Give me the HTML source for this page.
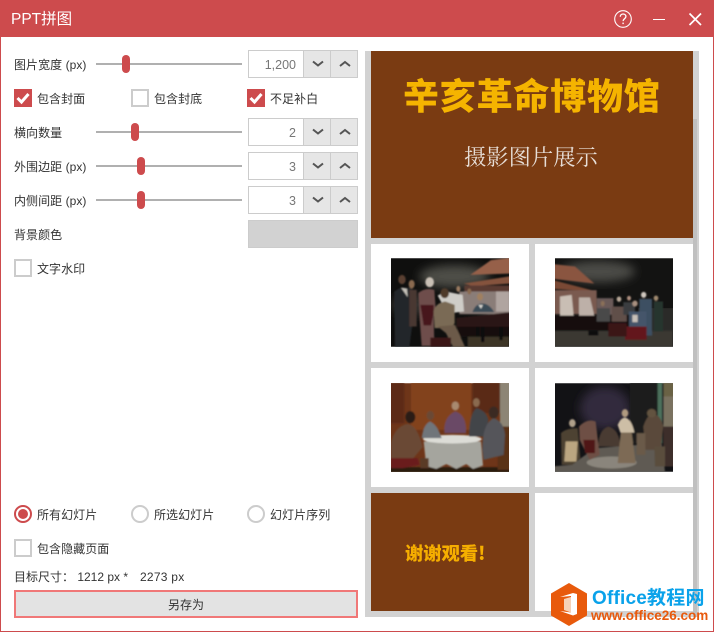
<!DOCTYPE html>
<html lang="zh"><head><meta charset="utf-8"><title>PPT拼图</title>
<style>
html,body{margin:0;padding:0;background:#fff}
#w{position:relative;width:714px;height:632px;overflow:hidden;background:#fff;font-family:"Liberation Sans","Noto Sans CJK SC",sans-serif;font-size:12px;color:#333}
#w div,#w span,#w svg{position:absolute;display:block;box-sizing:border-box}
.t{white-space:nowrap;height:18px;line-height:18px}
.l{margin-top:1px;letter-spacing:.05px}
.track{left:96px;width:146px;height:2px;background:#b0b0b0}
.thumb{width:8px;height:18px;border-radius:4px;background:#cd4b4d}
.spin{left:248px;width:110px;height:28px;border:1px solid #ccc;background:#fff}
.num{right:61px;top:5px;height:18px;line-height:18px;color:#777;font-size:12.5px}
.b1,.b2{top:0;width:27px;height:26px;background:#e6e6e6;border-left:1px solid #ccc}
.b1{left:54px}.b2{left:81px;width:27px}
.cb{width:18px;height:18px;border:2px solid #ccc;background:#fff}
.cb.on{background:#cd4b4d;border:0}
.rd{width:18px;height:18px;border-radius:50%;border:2px solid #ccc;background:#fff}
</style></head><body>
<div id="w">
<div style="left:0;top:0;width:714px;height:37px;background:#cd4b4d"></div>
<div style="left:0;top:37px;width:1px;height:595px;background:#cd4b4d"></div>
<div style="left:713px;top:37px;width:1px;height:595px;background:#cd4b4d"></div>
<div style="left:0;top:631px;width:714px;height:1px;background:#cd4b4d"></div>
<div class="t" style="left:11px;top:9px;height:22px;line-height:22px;font-size:15.500px;color:#fff">PPT拼图</div>
<svg style="left:612px;top:8px" width="95" height="22" viewBox="612 8 95 22" fill="none" stroke="#fff">
<circle cx="623" cy="19" r="8.300" stroke-width="1.100"/>
<path d="M620.300 16.800c0-1.700 1.200-2.800 2.800-2.800s2.800 1 2.800 2.500c0 2.200-2.800 2.200-2.800 4.600" stroke-width="1.300"/>
<path d="M623.100 22.600v1.500" stroke-width="1.400"/>
<path d="M653 19.500h12" stroke-width="1"/>
<path d="M689.500 13.500l11.500 11.500M701 13.500l-11.500 11.500" stroke-width="1.700"/>
</svg>

<div class="t l" style="left:14px;top:55px">图片宽度 (px)</div>
<div class="track" style="top:63px"></div><div class="thumb" style="left:122px;top:55px"></div>
<div class="spin" style="top:50px"><span class="num">1,200</span><div class="b1"><svg style="left:8px;top:8px" width="12" height="10" fill="none" stroke="#555" stroke-width="2"><path d="M1 2.500l5 4 5-4"/></svg></div><div class="b2"><svg style="left:8px;top:8px" width="12" height="10" fill="none" stroke="#555" stroke-width="2"><path d="M1 7l5-4 5 4"/></svg></div></div>

<div class="cb on" style="left:14px;top:89px"><svg style="left:0;top:0" width="18" height="18" fill="none" stroke="#fff" stroke-width="3"><path d="M3.500 9l4 4 7-8"/></svg></div>
<div class="t l" style="left:37px;top:89px">包含封面</div>
<div class="cb" style="left:131px;top:89px"></div>
<div class="t l" style="left:154px;top:89px">包含封底</div>
<div class="cb on" style="left:247px;top:89px"><svg style="left:0;top:0" width="18" height="18" fill="none" stroke="#fff" stroke-width="3"><path d="M3.500 9l4 4 7-8"/></svg></div>
<div class="t l" style="left:270px;top:89px">不足补白</div>

<div class="t l" style="left:14px;top:123px">横向数量</div>
<div class="track" style="top:131px"></div><div class="thumb" style="left:131px;top:123px"></div>
<div class="spin" style="top:118px"><span class="num">2</span><div class="b1"><svg style="left:8px;top:8px" width="12" height="10" fill="none" stroke="#555" stroke-width="2"><path d="M1 2.500l5 4 5-4"/></svg></div><div class="b2"><svg style="left:8px;top:8px" width="12" height="10" fill="none" stroke="#555" stroke-width="2"><path d="M1 7l5-4 5 4"/></svg></div></div>

<div class="t l" style="left:14px;top:157px">外围边距 (px)</div>
<div class="track" style="top:165px"></div><div class="thumb" style="left:137px;top:157px"></div>
<div class="spin" style="top:152px"><span class="num">3</span><div class="b1"><svg style="left:8px;top:8px" width="12" height="10" fill="none" stroke="#555" stroke-width="2"><path d="M1 2.500l5 4 5-4"/></svg></div><div class="b2"><svg style="left:8px;top:8px" width="12" height="10" fill="none" stroke="#555" stroke-width="2"><path d="M1 7l5-4 5 4"/></svg></div></div>

<div class="t l" style="left:14px;top:191px">内侧间距 (px)</div>
<div class="track" style="top:199px"></div><div class="thumb" style="left:137px;top:191px"></div>
<div class="spin" style="top:186px"><span class="num">3</span><div class="b1"><svg style="left:8px;top:8px" width="12" height="10" fill="none" stroke="#555" stroke-width="2"><path d="M1 2.500l5 4 5-4"/></svg></div><div class="b2"><svg style="left:8px;top:8px" width="12" height="10" fill="none" stroke="#555" stroke-width="2"><path d="M1 7l5-4 5 4"/></svg></div></div>

<div class="t l" style="left:14px;top:225px">背景颜色</div>
<div style="left:248px;top:220px;width:110px;height:28px;background:#d2d2d2;border:1px solid #ccc"></div>

<div class="cb" style="left:14px;top:259px"></div>
<div class="t l" style="left:37px;top:259px">文字水印</div>

<div class="rd" style="left:14px;top:505px;border-color:#cd4b4d"><div style="left:2px;top:2px;width:10px;height:10px;border-radius:50%;background:#cd4b4d"></div></div>
<div class="t l" style="left:37px;top:505px">所有幻灯片</div>
<div class="rd" style="left:131px;top:505px"></div>
<div class="t l" style="left:154px;top:505px">所选幻灯片</div>
<div class="rd" style="left:247px;top:505px"></div>
<div class="t l" style="left:270px;top:505px">幻灯片序列</div>

<div class="cb" style="left:14px;top:539px"></div>
<div class="t l" style="left:37px;top:539px">包含隐藏页面</div>
<div class="t" style="left:14px;top:568px;white-space:pre">目标尺寸： 1212 px *</div>
<div class="t" style="left:140px;top:568px;letter-spacing:.25px">2273 px</div>
<div class="t" style="left:14px;top:590px;width:344px;height:28px;line-height:27px;text-align:center;background:#e3e3e3;border:2px solid #f07878">另存为</div>

<!-- preview -->
<div style="left:365px;top:51px;width:334px;height:566px;background:#d2d2d2"></div>
<div style="left:693px;top:119px;width:4px;height:498px;background:#c0c0c0"></div>
<div style="left:371px;top:51px;width:322px;height:187px;background:#7a3b12"></div>
<div class="t" style="left:403px;top:69px;width:258px;height:50px;line-height:50px;font-size:36px;font-weight:900;letter-spacing:.8px;color:#f5b400;font-family:'Noto Sans CJK SC',sans-serif">辛亥革命博物馆</div>
<div class="t" style="left:464px;top:141px;height:30px;line-height:30px;font-size:22.300px;color:#e6ddd6;font-family:'Noto Serif CJK SC',serif">摄影图片展示</div>

<div style="left:371px;top:244px;width:158px;height:118px;background:#fff"></div>
<div style="left:535px;top:244px;width:158px;height:118px;background:#fff"></div>
<div style="left:371px;top:368px;width:158px;height:119px;background:#fff"></div>
<div style="left:535px;top:368px;width:158px;height:119px;background:#fff"></div>
<div style="left:371px;top:493px;width:158px;height:118px;background:#7a3b12"></div>
<div style="left:535px;top:493px;width:158px;height:118px;background:#fff"></div>
<div class="t" style="left:405px;top:540px;height:26px;line-height:26px;font-size:18.300px;font-weight:900;color:#f5ae00;font-family:'Noto Sans CJK SC',sans-serif">谢谢观看!</div>

<svg style="left:391px;top:258px" width="118" height="89" viewBox="0 0 354 266">
<defs><filter id="f" x="-5%" y="-5%" width="110%" height="110%"><feGaussianBlur stdDeviation="2.400"/></filter><filter id="g" x="-30%" y="-30%" width="160%" height="160%"><feGaussianBlur stdDeviation="14"/></filter><clipPath id="c"><rect width="354" height="266"/></clipPath></defs>
<g clip-path="url(#c)">
<rect width="354" height="266" fill="#0f0f0e"/>
<ellipse cx="190" cy="55" rx="105" ry="34" fill="#4d4d46" filter="url(#g)"/>
<ellipse cx="60" cy="140" rx="60" ry="30" fill="#33332e" filter="url(#g)"/>
<g filter="url(#f)">
<polygon points="238,50 300,6 360,-2 360,46" fill="#96604a"/>
<polygon points="218,76 360,54 360,76 246,84" fill="#85523c"/>
<rect x="220" y="82" width="140" height="18" fill="#5a3a30"/>
<rect x="205" y="100" width="155" height="68" fill="#8a7d78"/>
<rect x="315" y="100" width="40" height="60" fill="#b0a5a0"/>
<polygon points="196,180 360,162 360,206 196,206" fill="#2c1613"/>
<rect x="200" y="206" width="160" height="30" fill="#120f0c"/>
<rect x="230" y="236" width="124" height="30" fill="#3e3528"/>
<path d="M275 206v46M330 206v40M260 206v28" stroke="#0c0a08" stroke-width="10"/>
<path d="M10 100q25-20 55-8l4 70-14 104H12z" fill="#20272b"/>
<path d="M30 88l18 4 2 25z" fill="#c6c2ba"/>
<ellipse cx="33" cy="64" rx="11" ry="14" fill="#5a4030"/>
<rect x="55" y="95" width="22" height="110" fill="#4a3832"/>
<ellipse cx="62" cy="78" rx="9" ry="13" fill="#8a6a50"/>
<path d="M82 105q20-18 48-10l4 60-6 20 2 88H92l-6-80z" fill="#6e4e4c"/>
<path d="M88 140h40v26l-8 36h-22z" fill="#47151f"/>
<ellipse cx="116" cy="72" rx="13" ry="15" fill="#c9c0b5"/>
<path d="M140 112l25-12 50 10 4 50-50 6z" fill="#cfcdc8"/>
<ellipse cx="202" cy="92" rx="6" ry="9" fill="#9a7a60"/>
<ellipse cx="235" cy="100" rx="6" ry="9" fill="#8a6a50"/>
<path d="M128 160q5-25 35-30l28 10v55l-10 15h-50z" fill="#7a6a55"/>
<ellipse cx="161" cy="105" rx="13" ry="15" fill="#503a2a"/>
<polygon points="140,205 192,200 222,266 186,266 165,225" fill="#6c5a48"/>
<rect x="118" y="238" width="62" height="28" fill="#3a1219"/>
<path d="M244 162q10-26 30-26t36 26z" fill="#3b4b57"/>
<path d="M262 140h14l-6 12z" fill="#d8d6d0"/>
<ellipse cx="267" cy="116" rx="9" ry="11" fill="#a08060"/>
</g></g></svg>

<svg style="left:555px;top:258px" width="118" height="89" viewBox="0 0 354 266">
<g clip-path="url(#c)">
<rect width="354" height="266" fill="#131312"/>
<ellipse cx="130" cy="40" rx="110" ry="32" fill="#4c4c46" filter="url(#g)"/>
<rect x="250" y="150" width="110" height="70" fill="#2a2a28"/>
<g filter="url(#f)">
<polygon points="-5,18 60,25 118,76 -5,62" fill="#8a5540"/>
<polygon points="-5,66 125,100 -5,92" fill="#7a4a35"/>
<rect x="-5" y="96" width="130" height="72" fill="#7a5a50"/>
<rect x="125" y="120" width="50" height="50" fill="#6a5a58"/>
<polygon points="15,115 50,110 56,172 15,172" fill="#c9beb4"/>
<polygon points="72,118 105,118 118,172 72,172" fill="#bdb0a8"/>
<rect x="-5" y="172" width="225" height="44" fill="#17100e"/>
<polygon points="-5,218 354,218 354,266 -5,266" fill="#3a3833"/>
<rect x="125" y="150" width="40" height="40" fill="#4a4a48"/><ellipse cx="143" cy="136" rx="6" ry="8" fill="#8a7058"/>
<rect x="170" y="145" width="45" height="45" fill="#60504a"/><ellipse cx="192" cy="123" rx="7" ry="8" fill="#b8a898"/>
<rect x="205" y="132" width="35" height="38" fill="#3a3c40"/><ellipse cx="222" cy="120" rx="6" ry="7" fill="#b09080"/>
<rect x="253" y="122" width="38" height="110" fill="#3c5062"/><ellipse cx="266" cy="110" rx="8" ry="9" fill="#d0c8c0"/>
<rect x="222" y="160" width="52" height="75" fill="#44546a"/><rect x="232" y="170" width="16" height="22" fill="#c8c0b8"/>
<rect x="210" y="205" width="65" height="40" fill="#64181e"/><ellipse cx="240" cy="136" rx="8" ry="9" fill="#a89080"/>
<rect x="296" y="130" width="28" height="90" fill="#26352f"/><ellipse cx="303" cy="120" rx="7" ry="8" fill="#a08a70"/>
<rect x="160" y="195" width="55" height="40" fill="#3a1216"/>
<rect x="100" y="218" width="30" height="14" fill="#111"/>
</g></g></svg>

<svg style="left:391px;top:383px" width="118" height="89" viewBox="0 0 354 266">
<g clip-path="url(#c)"><rect width="354" height="266" fill="#6e3519"/>
<g filter="url(#f)">
<rect x="60" y="-10" width="180" height="150" fill="#82421f"/>
<rect x="-10" y="-10" width="50" height="130" fill="#5d2c14"/>
<rect x="245" y="-10" width="85" height="100" fill="#5a2b16"/>
<rect x="327" y="-10" width="35" height="140" fill="#8d8574"/>
<rect x="-10" y="252" width="374" height="24" fill="#2c1a10"/>
<rect x="320" y="130" width="40" height="130" fill="#5a3018"/>
<path d="M98 175h172l6 72-30 10-20-14-30 14-30-14-30 14-30-8z" fill="#a5a59e"/>
<ellipse cx="184" cy="168" rx="88" ry="13" fill="#dcdcd6"/>
<path d="M160 150q-2-50 33-65 34 10 32 65z" fill="#6a4a66"/><ellipse cx="193" cy="68" rx="11" ry="13" fill="#a88a70"/>
<path d="M234 160q0-65 22-85 30 8 36 35l-8 50z" fill="#43444a"/><ellipse cx="256" cy="58" rx="10" ry="13" fill="#8a6a50"/>
<path d="M92 165q5-40 25-50 22 10 35 50z" fill="#70757a"/><ellipse cx="118" cy="97" rx="11" ry="14" fill="#6a4a35"/>
<path d="M0 180q10-50 50-58 30 5 45 70l-30 35H0z" fill="#6b4a35"/><ellipse cx="58" cy="102" rx="15" ry="18" fill="#2b1d15"/>
<path d="M0 225h80l6 20-50 10H0z" fill="#6a1a1e"/>
<rect x="88" y="225" width="25" height="30" fill="#5a3a28"/>
<path d="M274 200q0-80 34-95 30 10 34 50l-4 60-60 15z" fill="#55555a"/><ellipse cx="308" cy="88" rx="15" ry="18" fill="#3a2a20"/>
</g></g></svg>

<svg style="left:555px;top:383px" width="118" height="89" viewBox="0 0 354 266">
<g clip-path="url(#c)"><rect width="354" height="266" fill="#121215"/>
<ellipse cx="150" cy="75" rx="75" ry="65" fill="#302c3c" filter="url(#g)"/>
<g filter="url(#f)">
<rect x="225" y="-10" width="85" height="190" fill="#1b1c1c"/>
<rect x="308" y="-10" width="14" height="190" fill="#4c6f5c"/>
<rect x="325" y="-10" width="35" height="50" fill="#6a6245"/>
<rect x="325" y="40" width="35" height="90" fill="#7a7260"/>
<rect x="325" y="130" width="35" height="120" fill="#3d2e2a"/>
<polygon points="120,195 320,180 330,266 -10,266 -10,250 50,245" fill="#5e5a52"/>
<ellipse cx="170" cy="238" rx="75" ry="18" fill="#8a857c"/>
<path d="M130 190q0-50 30-60 35 10 35 60z" fill="#4a3a30"/>
<path d="M72 130q25-25 50-15l12 100-30 15-30-60z" fill="#6e5044"/><path d="M85 170h35v40h-30z" fill="#501616"/>
<path d="M18 150q15-15 50-15l8 90-24 20H20z" fill="#4e4232"/><path d="M32 175h36l-4 60H28z" fill="#bba680"/><ellipse cx="52" cy="120" rx="10" ry="12" fill="#b0a08a"/>
<path d="M188 125q10-22 22-22 20 5 28 45h-42z" fill="#cdbea6"/><polygon points="197,148 230,148 242,240 188,240" fill="#7d6a55"/><ellipse cx="210" cy="90" rx="10" ry="12" fill="#b09a80"/>
<path d="M265 130q10-30 25-40 28 5 35 40l-8 70h-45z" fill="#5a4a3a"/><ellipse cx="290" cy="90" rx="14" ry="13" fill="#62523f"/>
<rect x="245" y="150" width="26" height="65" fill="#6a5a48"/><path d="M298 190h32v60h-30z" fill="#5a4d3c"/>
</g></g></svg>

<!-- watermark -->
<svg style="left:549px;top:581px" width="40" height="47" viewBox="549 581 40 47">
<polygon points="569,583 587,593.500 587,615.500 569,626 551,615.500 551,593.500" fill="#e85a0c"/>
<polygon points="560,597 573,593 577,594 577,614 573,615.500 560,611 571,612.500 571,596" fill="#fff"/>
<polygon points="564,599 571,597 571,612.500 564,610" fill="#f6d2b8"/>
</svg>
<div class="t" style="left:592px;top:587px;height:24px;line-height:24px;font-size:19px;font-weight:bold;color:#0aa2ea;letter-spacing:.2px">Office教程网</div>
<div class="t" style="left:591px;top:608px;height:16px;line-height:16px;font-size:13.500px;font-weight:bold;color:#e8590c">www.office26.com</div>
</div>
</body></html>
